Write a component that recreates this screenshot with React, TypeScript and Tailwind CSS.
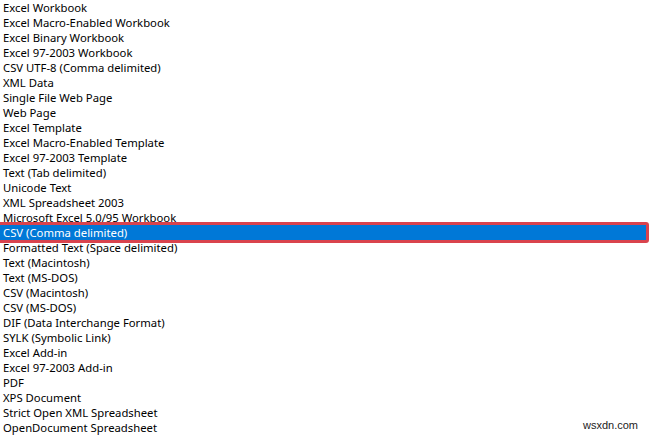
const items = [
  "Excel Workbook",
  "Excel Macro-Enabled Workbook",
  "Excel Binary Workbook",
  "Excel 97-2003 Workbook",
  "CSV UTF-8 (Comma delimited)",
  "XML Data",
  "Single File Web Page",
  "Web Page",
  "Excel Template",
  "Excel Macro-Enabled Template",
  "Excel 97-2003 Template",
  "Text (Tab delimited)",
  "Unicode Text",
  "XML Spreadsheet 2003",
  "Microsoft Excel 5.0/95 Workbook",
  "CSV (Comma delimited)",
  "Formatted Text (Space delimited)",
  "Text (Macintosh)",
  "Text (MS-DOS)",
  "CSV (Macintosh)",
  "CSV (MS-DOS)",
  "DIF (Data Interchange Format)",
  "SYLK (Symbolic Link)",
  "Excel Add-in",
  "Excel 97-2003 Add-in",
  "PDF",
  "XPS Document",
  "Strict Open XML Spreadsheet",
  "OpenDocument Spreadsheet",
]

const selected = 15

export default function App() {
  return (
    <div className="relative w-[650px] h-[435px] bg-white overflow-hidden" style={{ fontFamily: '"Noto Sans", "Open Sans", sans-serif' }}>
      <ul className="flex flex-col">
        {items.map((it, i) => (
          <li
            key={it}
            className={`relative h-[15px] leading-[15px] text-[11.3px] pl-[3px] w-[647px] whitespace-nowrap ${
              i === selected ? "bg-[#0078d7] text-white" : "text-black"
            }`}
          >
            {it}
            {i === selected && (
              <span className="absolute -left-[3px] -right-[2px] -top-[3px] -bottom-[3px] border-[3px] border-[#d9434d] rounded-[3px]" />
            )}
          </li>
        ))}
      </ul>
      <span className="absolute right-[12px] bottom-[4px] text-[11px] leading-none text-[#222]" style={{ fontFamily: '"Liberation Sans", Arial, sans-serif' }}>
        wsxdn.com
      </span>
    </div>
  )
}
